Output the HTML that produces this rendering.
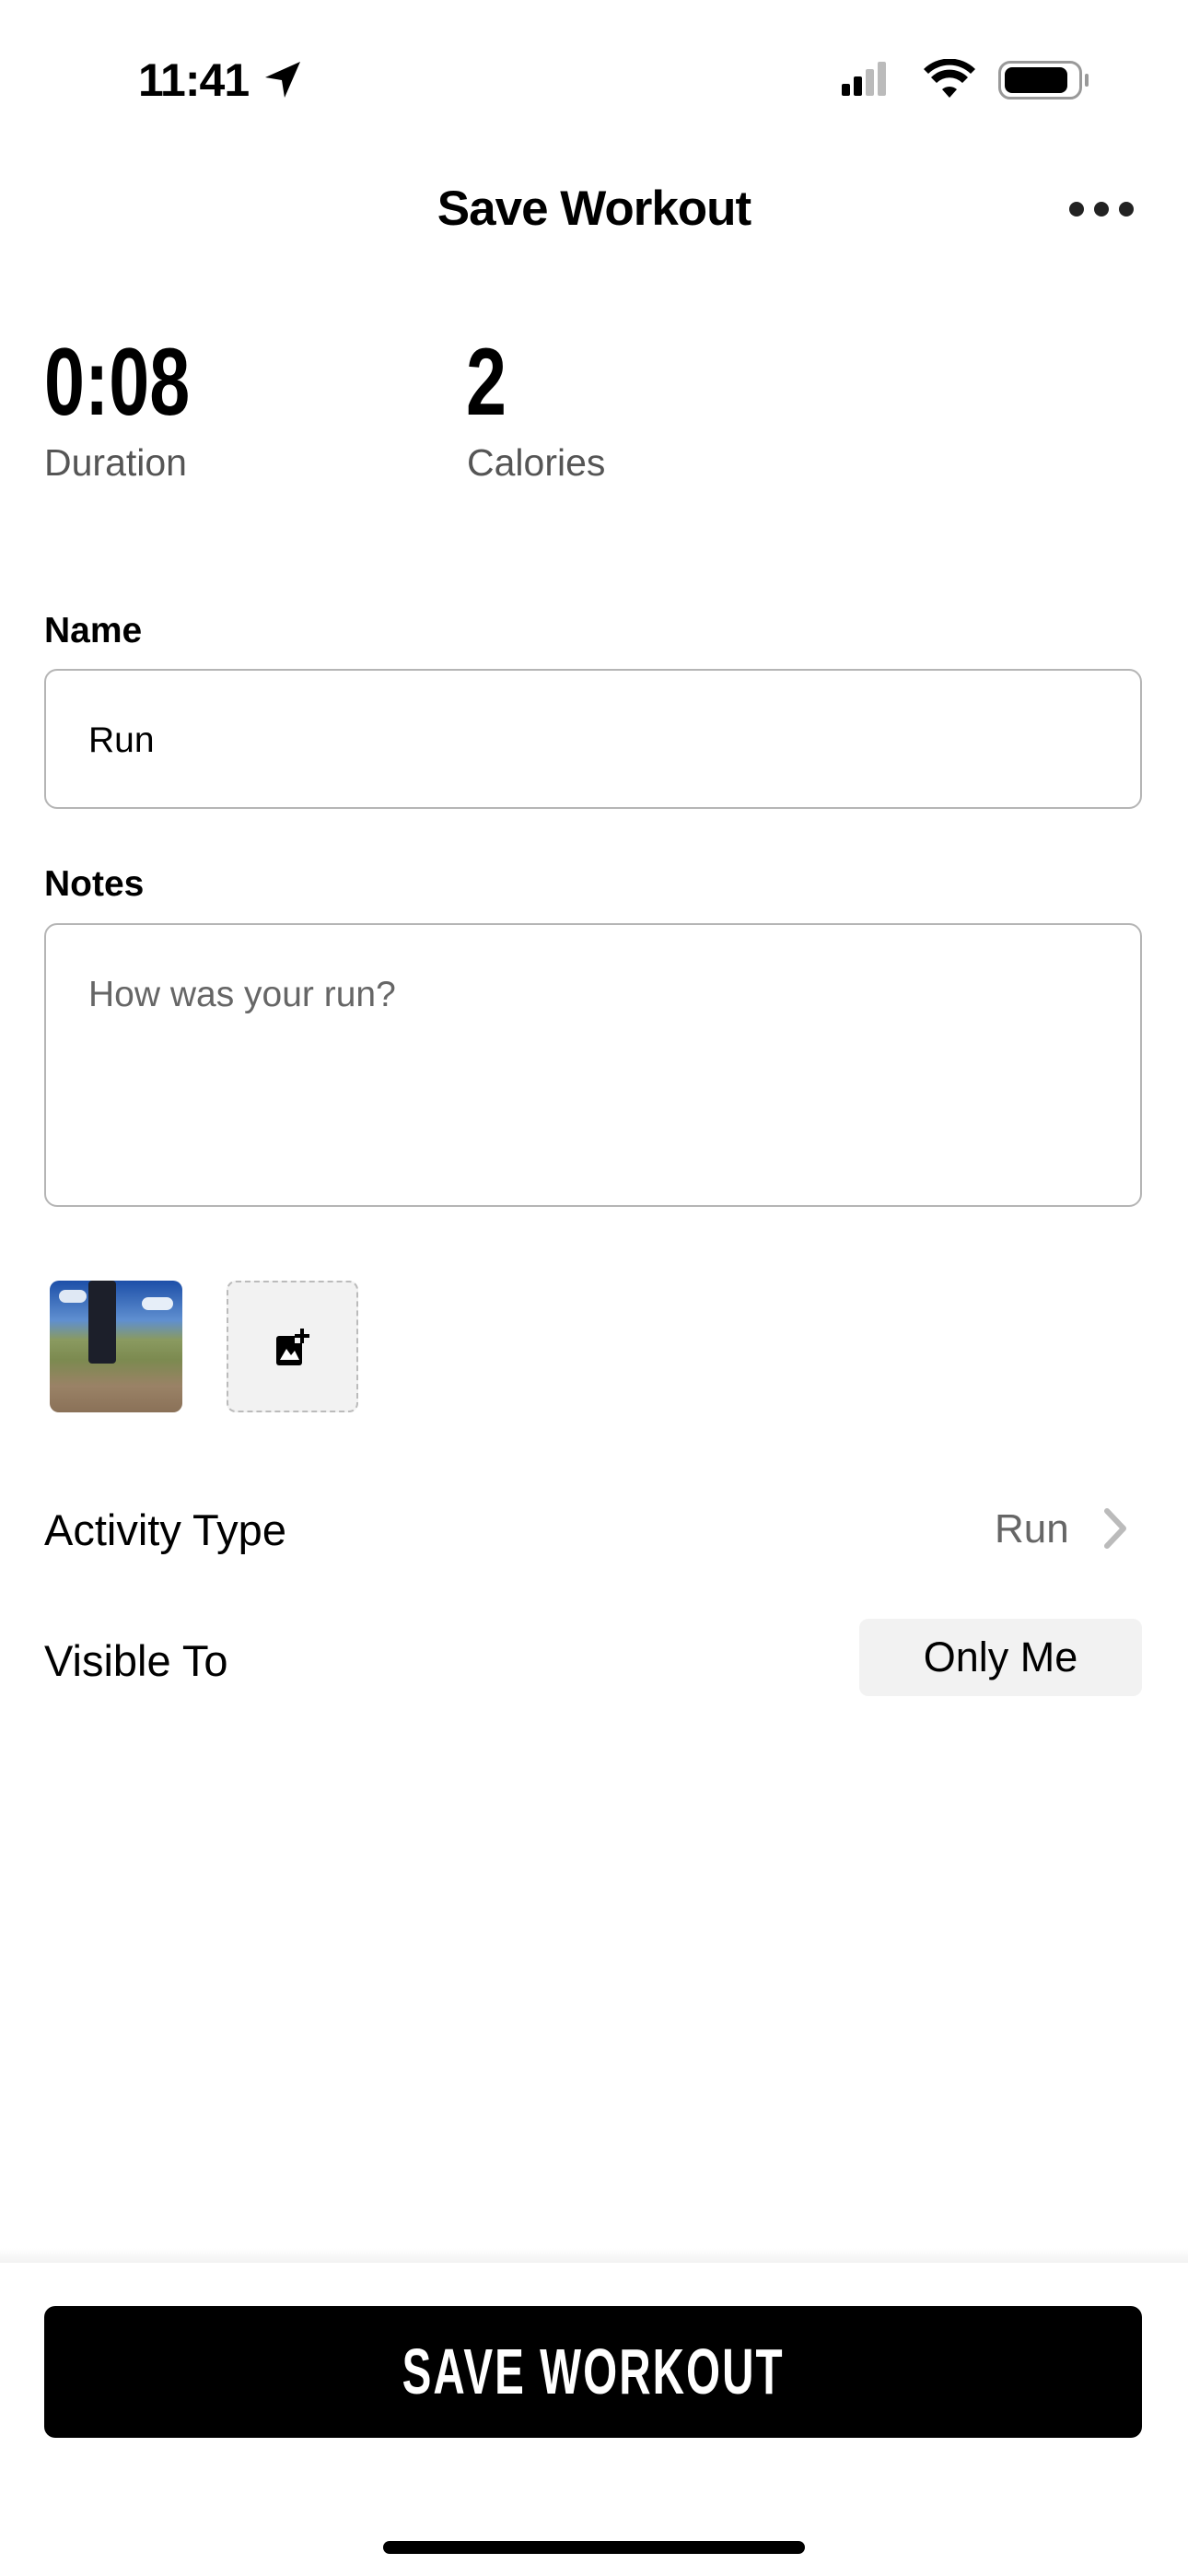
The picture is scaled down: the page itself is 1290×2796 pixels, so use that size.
<!DOCTYPE html>
<html><head><meta charset="utf-8"><style>
*{margin:0;padding:0;box-sizing:border-box}
body{width:1290px;height:2796px;background:#fff;font-family:"Liberation Sans",sans-serif;position:relative;overflow:hidden;color:#000}
.a{position:absolute}
.cond{display:inline-block;transform:scaleX(.72);transform-origin:left center;font-weight:bold}
.lbl{font-size:39px;font-weight:bold}
.box{border:2px solid #b5b5b5;border-radius:14px}
</style></head><body>
<div class="a" style="left:150px;top:58px;font-size:50px;font-weight:600;letter-spacing:-1px">11:41</div>
<svg class="a" style="left:284px;top:64px" width="46" height="46" viewBox="0 0 46 46"><path d="M42 3 L4 20 L22 23 L25 42 Z" fill="#000"/></svg>
<svg class="a" style="left:914px;top:66px" width="70" height="40"><rect x="0" y="25" width="9" height="13" rx="2" fill="#000"/><rect x="13" y="17" width="9" height="21" rx="2" fill="#000"/><rect x="26" y="9" width="9" height="29" rx="2" fill="#bbb"/><rect x="39" y="1" width="9" height="37" rx="2" fill="#bbb"/></svg>
<svg class="a" style="left:1002px;top:64px" width="58" height="42" viewBox="0 0 58 42"><path d="M29 42 L21 33 A12 12 0 0 1 37 33 Z" fill="#000"/><path d="M9 20 A28 28 0 0 1 49 20 L43 26 A20 20 0 0 0 15 26 Z" fill="#000"/><path d="M1 11 A40 40 0 0 1 57 11 L52 16 A33 33 0 0 0 6 16 Z" fill="#000"/></svg>
<div class="a" style="left:1084px;top:66px;width:91px;height:42px;border:3px solid #999;border-radius:13px"></div>
<div class="a" style="left:1091px;top:73px;width:68px;height:28px;background:#000;border-radius:8px"></div>
<div class="a" style="left:1178px;top:80px;width:4px;height:14px;background:#999;border-radius:2px"></div>
<div class="a" style="left:0;width:1290px;top:196px;text-align:center;font-size:53px;font-weight:bold;letter-spacing:-1px">Save Workout</div>
<svg class="a" style="left:1158px;top:216px" width="76" height="22"><circle cx="11" cy="11" r="8" fill="#222"/><circle cx="38" cy="11" r="8" fill="#222"/><circle cx="65" cy="11" r="8" fill="#222"/></svg>
<div class="a" style="left:48px;top:358px;font-size:104px;line-height:1.1"><span class="cond" style="transform:scaleX(.76)">0:08</span></div>
<div class="a" style="left:506px;top:358px;font-size:104px;line-height:1.1"><span class="cond" style="transform:scaleX(.76)">2</span></div>
<div class="a" style="left:48px;top:479px;font-size:41px;color:#555">Duration</div>
<div class="a" style="left:507px;top:479px;font-size:41px;color:#555">Calories</div>
<div class="a lbl" style="left:48px;top:663px">Name</div>
<div class="a box" style="left:48px;top:726px;width:1192px;height:152px"></div>
<div class="a" style="left:96px;top:782px;font-size:39px">Run</div>
<div class="a lbl" style="left:48px;top:938px">Notes</div>
<div class="a box" style="left:48px;top:1002px;width:1192px;height:308px"></div>
<div class="a" style="left:96px;top:1058px;font-size:39px;color:#666">How was your run?</div>
<div class="a" style="left:54px;top:1390px;width:144px;height:143px;border-radius:10px;overflow:hidden;background:linear-gradient(#1d4fa8 0%,#5f8fd0 30%,#8a9a60 45%,#7c8a50 60%,#9a8266 80%,#8a7158 100%)">
<div class="a" style="left:42px;top:0;width:30px;height:90px;background:#1c1f2a;border-radius:4px"></div>
<div class="a" style="left:10px;top:10px;width:30px;height:14px;background:#dfe8f4;border-radius:8px"></div>
<div class="a" style="left:100px;top:18px;width:34px;height:14px;background:#e6eef8;border-radius:8px"></div></div>
<div class="a" style="left:246px;top:1390px;width:143px;height:143px;border:2px dashed #bbb;border-radius:10px;background:#f2f2f2"></div>
<svg class="a" style="left:300px;top:1440px" width="40" height="44" viewBox="0 0 40 44"><rect x="0" y="10" width="28" height="32" rx="3" fill="#000"/><path d="M4 36 L11 24 L16 31 L20 26 L25 36 Z" fill="#fff"/><rect x="20" y="4" width="16" height="14" fill="#f2f2f2"/><path d="M28 2 V18 M20 10 H36" stroke="#000" stroke-width="4"/></svg>
<div class="a" style="left:48px;top:1633px;font-size:47px">Activity Type</div>
<div class="a" style="left:1080px;top:1635px;font-size:44px;color:#666">Run</div>
<svg class="a" style="left:1196px;top:1636px" width="30" height="46"><path d="M6 4 L24 23 L6 42" stroke="#bbb" stroke-width="6" fill="none" stroke-linecap="round" stroke-linejoin="round"/></svg>
<div class="a" style="left:48px;top:1775px;font-size:47px">Visible To</div>
<div class="a" style="left:933px;top:1757px;width:307px;height:84px;border-radius:10px;background:#f2f2f2;text-align:center;line-height:84px;font-size:45px">Only Me</div>
<div class="a" style="left:0;top:2440px;width:1290px;height:16px;background:linear-gradient(rgba(0,0,0,0),rgba(0,0,0,.05))"></div>
<div class="a" style="left:48px;top:2503px;width:1192px;height:143px;background:#000;border-radius:12px;color:#fff;font-size:70px;line-height:143px;text-align:center"><span class="cond" style="transform:scaleX(.68);transform-origin:center;letter-spacing:3px">SAVE WORKOUT</span></div>
<div class="a" style="left:416px;top:2758px;width:458px;height:14px;background:#000;border-radius:7px"></div>
</body></html>
